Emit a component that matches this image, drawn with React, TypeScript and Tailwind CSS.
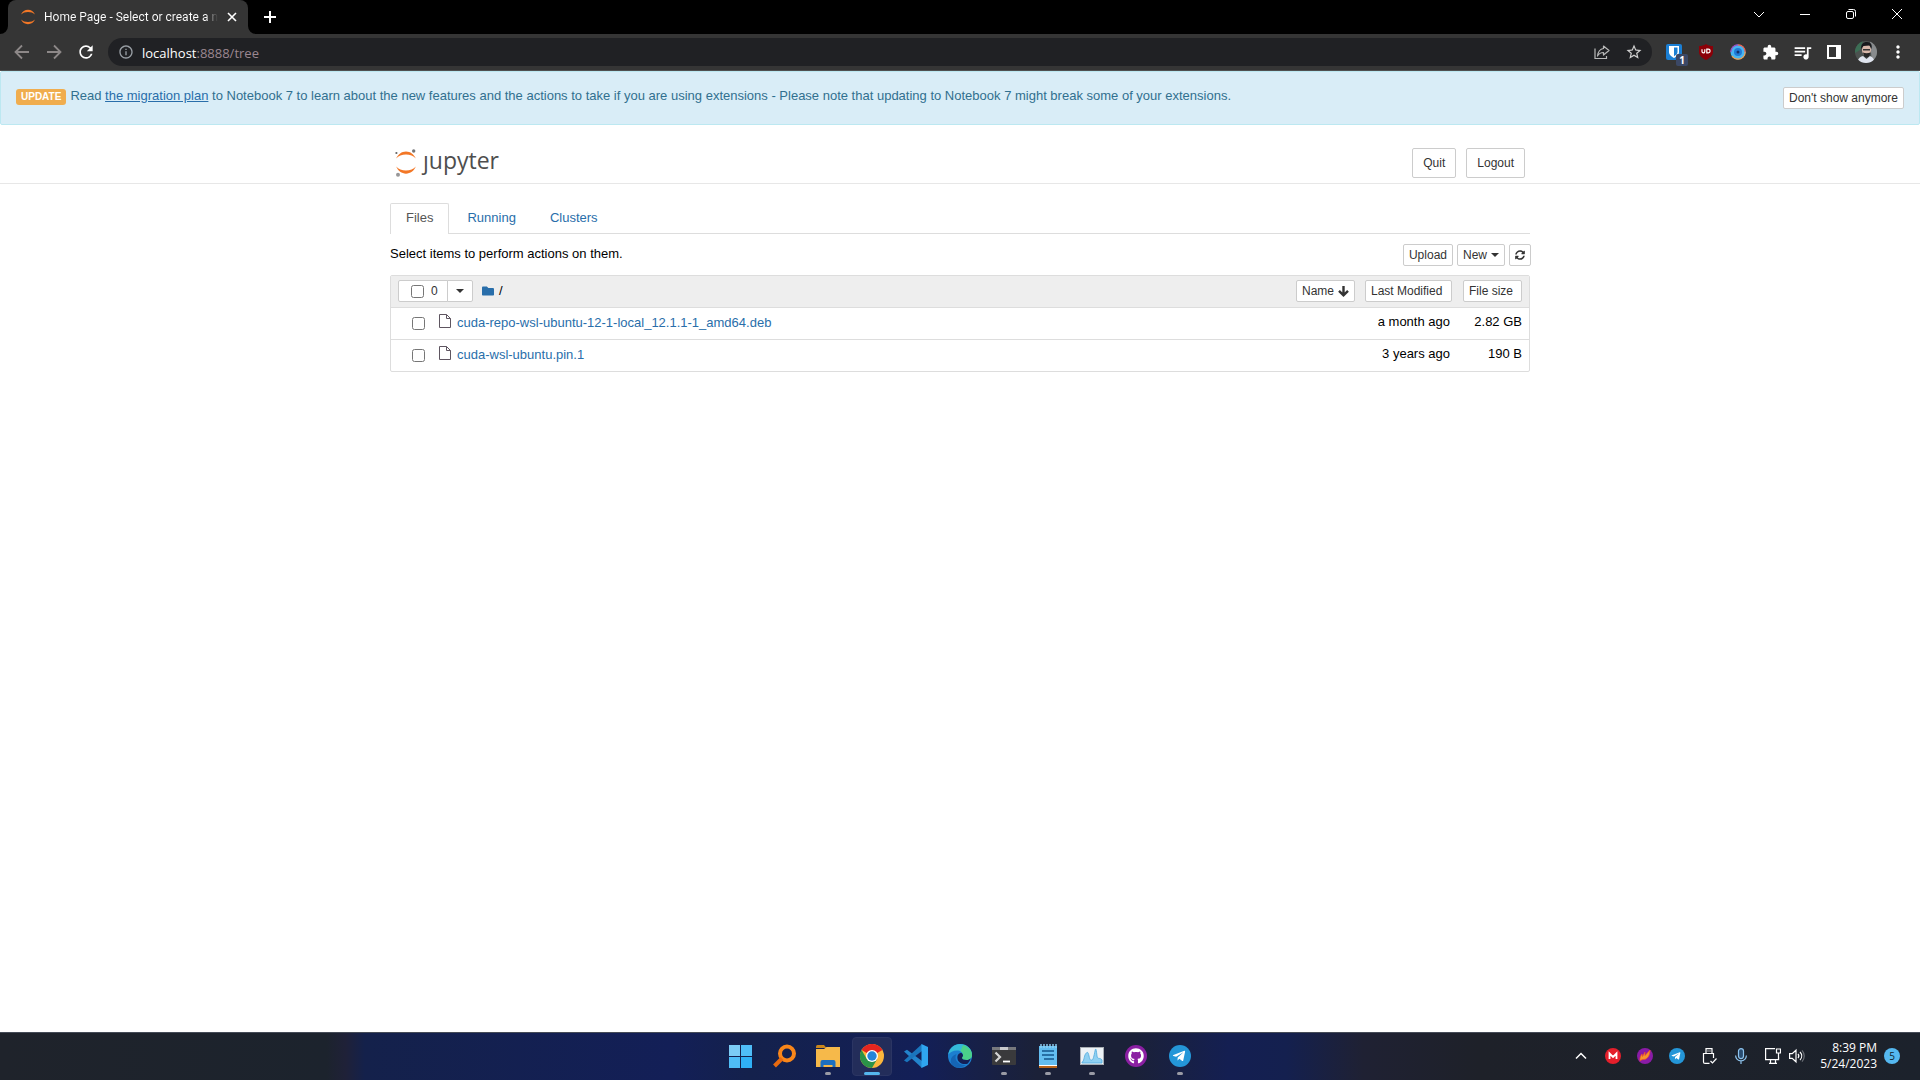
import React, { ReactNode } from "react";
import classNames from "clsx";
import { FaFolder, FaGithub, FaSyncAlt, FaTelegramPlane } from "react-icons/fa";
import { MdExtension, MdMoreVert, MdOutlineInfo, MdQueueMusic, MdRefresh, MdStarBorder } from "react-icons/md";

const files = [
  {
    name: "cuda-repo-wsl-ubuntu-12-1-local_12.1.1-1_amd64.deb",
    modified: "a month ago",
    size: "2.82 GB",
  },
  { name: "cuda-wsl-ubuntu.pin.1", modified: "3 years ago", size: "190 B" },
];

const uiFont = "font-['Segoe_UI','Open_Sans','Noto_Sans',sans-serif]";

/* ---------- browser ---------- */

function Favicon() {
  return (
    <svg viewBox="0 0 16 16" className="h-4 w-4 shrink-0" fill="#f37726">
      <path d="M1 5.4C2.3 2.5 4.9.8 8 .8s5.7 1.7 7 4.6C13.3 3.7 10.8 2.9 8 2.9S2.7 3.7 1 5.4z" />
      <path d="M1 10.6c1.3 2.9 3.9 4.6 7 4.6s5.700-1.7 7-4.6c-1.7 1.7-4.2 2.5-7 2.5s-5.3-.8-7-2.5z" />
    </svg>
  );
}

function WindowButton({ label, children }: { label: string; children: ReactNode }) {
  return (
    <button aria-label={label} className="flex h-7 w-[46px] items-center justify-center">
      <svg viewBox="0 0 12 12" className="h-3 w-3" fill="none" stroke="#fff" strokeWidth="1">
        {children}
      </svg>
    </button>
  );
}

function TabStrip() {
  return (
    <div className="flex h-[34px] items-stretch bg-black pl-2">
      <div className="relative flex w-60 items-center rounded-t-lg bg-[#353535] pl-3 pr-2 text-white">
        <svg viewBox="0 0 8 8" className="absolute -left-2 bottom-0 h-2 w-2" fill="#353535">
          <path d="M8 0v8H0a8 8 0 0 0 8-8z" />
        </svg>
        <svg viewBox="0 0 8 8" className="absolute -right-2 bottom-0 h-2 w-2" fill="#353535">
          <path d="M0 0v8h8a8 8 0 0 1-8-8z" />
        </svg>
        <Favicon />
        <span className="ml-2 whitespace-nowrap bg-linear-to-r from-white from-93% to-[#353535] bg-clip-text font-['Segoe_UI',Roboto,sans-serif] text-[12px] text-transparent">
          Home Page - Select or create a n
        </span>
        <button aria-label="Close tab" className="ml-auto flex h-4 w-4 items-center justify-center">
          <svg viewBox="0 0 10 10" className="h-[10px] w-[10px]" stroke="#fff" strokeWidth="1.6">
            <path d="M1 1l8 8M9 1l-8 8" />
          </svg>
        </button>
      </div>
      <button aria-label="New tab" className="ml-2 flex w-7 items-center justify-center">
        <svg viewBox="0 0 12 12" className="h-3 w-3" stroke="#fff" strokeWidth="2">
          <path d="M6 0v12M0 6h12" />
        </svg>
      </button>
      <div className="ml-auto flex">
        <WindowButton label="Search tabs">
          <path d="M1 4l5 5 5-5" />
        </WindowButton>
        <WindowButton label="Minimize">
          <path d="M1 6.5h10" />
        </WindowButton>
        <WindowButton label="Restore">
          <rect x="1.5" y="3.5" width="7" height="7" rx="1.5" />
          <path d="M3.5 1.5h5a2 2 0 0 1 2 2v5" />
        </WindowButton>
        <WindowButton label="Close">
          <path d="M1 1l10 10M11 1L1 11" />
        </WindowButton>
      </div>
    </div>
  );
}

function ToolButton({ label, children }: { label: string; children: ReactNode }) {
  return (
    <button aria-label={label} className="flex h-7 w-8 shrink-0 items-center justify-center">
      {children}
    </button>
  );
}

function Toolbar() {
  return (
    <div className="flex h-[37px] items-center border-b border-[#505050] bg-[#353535] px-[6px] text-white">
      <ToolButton label="Back">
        <svg viewBox="0 0 16 16" className="h-4 w-4" fill="none" stroke="#8d8888" strokeWidth="1.8">
          <path d="M15 8H2M8 1.5L1.5 8 8 14.5" />
        </svg>
      </ToolButton>
      <ToolButton label="Forward">
        <svg viewBox="0 0 16 16" className="h-4 w-4" fill="none" stroke="#8d8888" strokeWidth="1.8">
          <path d="M1 8h13M8 1.5L14.5 8 8 14.5" />
        </svg>
      </ToolButton>
      <ToolButton label="Reload">
        <MdRefresh size={20} />
      </ToolButton>
      <div className="ml-[6px] flex h-7 flex-1 items-center rounded-full bg-[#202124] pl-[10px] pr-[2px]">
        <MdOutlineInfo size={16} color="#9aa0a6" className="shrink-0" />
        <div className="ml-2 flex-1 pt-[2px] text-[13px] leading-5 text-[#9b8790]">
          <span className="text-white">localhost</span>:8888/tree
        </div>
        <ToolButton label="Share">
          <svg viewBox="0 0 16 16" className="h-4 w-4" fill="none" stroke="#b9b9b9" strokeWidth="1.2">
            <path d="M1 4.5v10h11.5V12" />
            <path d="M9.5 2l5.5 4.5-5.5 4.5V8.5C7 8.5 5 9.5 3.5 12 4 8 6 5 9.5 4.5z" strokeLinejoin="round" />
          </svg>
        </ToolButton>
        <ToolButton label="Bookmark this tab">
          <MdStarBorder size={18} color="#d0d0d0" />
        </ToolButton>
      </div>
      <div className="ml-[6px] flex">
        <ToolButton label="Bitwarden">
          <svg viewBox="0 0 28 28" className="h-7 w-7">
            <rect x="6" y="6" width="16" height="16" rx="2" fill="#1b7fd4" />
            <path d="M9 8h10v6c0 3-2.500 4.500-5 6-2.500-1.500-5-3-5-6z" fill="#fff" />
            <path d="M14 9.500h3.500V14c0 2-1.500 3-3.500 4.200z" fill="#1b7fd4" />
            <rect x="16" y="16" width="12" height="12" rx="2" fill="#3b4866" />
            <text x="22" y="26" textAnchor="middle" fill="#fff" fontSize="10" fontWeight="700" fontFamily="Open Sans">
              1
            </text>
          </svg>
        </ToolButton>
        <ToolButton label="uBlock Origin">
          <svg viewBox="0 0 16 16" className="h-4 w-4">
            <path d="M8 0c2 1.5 4.5 2 7 2v6c0 4-4 6.5-7 8-3-1.5-7-4-7-8V2c2.500 0 5-.5 7-2z" fill="#8b0008" />
            <path
              d="M4 5.200v2.300a1.400 1.400 0 0 0 2.800 0V5.200M8.800 5.200h1.500a1.800 1.800 0 0 1 0 3.600H8.800z"
              fill="none"
              stroke="#fff"
              strokeWidth="1.2"
            />
          </svg>
        </ToolButton>
        <ToolButton label="Eye extension">
          <svg viewBox="0 0 16 16" className="h-4 w-4" fill="none">
            <circle cx="8" cy="8" r="7.5" fill="#48b4f0" />
            <path d="M8 .8A7.200 7.200 0 0 0 .8 8" stroke="#a04cc0" strokeWidth="1.2" />
            <path d="M8 .8A7.200 7.200 0 0 1 15.200 8" stroke="#f0604a" strokeWidth="1.2" />
            <path d="M15.200 8A7.200 7.200 0 0 1 8 15.200 7.200 7.200 0 0 1 2 12" stroke="#f5a04c" strokeWidth="1.2" />
            <circle cx="8" cy="8" r="4" fill="#1f7ad6" />
            <circle cx="8" cy="8" r="1.5" fill="#12306c" />
          </svg>
        </ToolButton>
        <ToolButton label="Extensions">
          <MdExtension size={17} />
        </ToolButton>
        <ToolButton label="Media control">
          <MdQueueMusic size={21} />
        </ToolButton>
        <ToolButton label="Side panel">
          <svg viewBox="0 0 14 14" className="h-[14px] w-[14px]">
            <path fillRule="evenodd" d="M0 0h14v14H0zM2 2v10h7V2z" fill="#fff" />
          </svg>
        </ToolButton>
        <ToolButton label="Profile">
          <svg viewBox="0 0 22 22" className="h-[22px] w-[22px] rounded-full">
            <rect width="22" height="22" fill="#4c5250" />
            <path d="M0 0h8l-3 9-5 3z" fill="#3c6e55" />
            <path d="M15 0h7v22h-5z" fill="#888b8d" />
            <ellipse cx="11.5" cy="9" rx="4.5" ry="6" fill="#d8b8aa" />
            <path d="M6 8c0-5 2-7 6-7s5.500 3 4.500 7l-2-3.500-6 .5z" fill="#17191c" />
            <path d="M8 8h7v1.500H8z" fill="#333" />
            <path d="M2 22c1-5 4-6.500 6-7l3.500 3 3.500-3c3 1 4 3 5 7z" fill="#dfe4ee" />
            <path d="M8 11.500c2 1 5 1 7.500 0-.5 3-2 5-4 5s-3-2-3.500-5z" fill="#262626" />
          </svg>
        </ToolButton>
        <ToolButton label="Menu">
          <MdMoreVert size={20} />
        </ToolButton>
      </div>
    </div>
  );
}

/* ---------- notebook page ---------- */

type ButtonProps = { children: ReactNode; large?: boolean; className?: string; label?: string };

function Button({ children, large, className, label }: ButtonProps) {
  return (
    <button
      aria-label={label}
      className={classNames(
        "inline-flex items-center justify-center whitespace-nowrap rounded-[2px] border border-[#ccc] bg-white text-[12px] leading-[18px] text-[#333]",
        large ? "h-[30px] px-[10px]" : "h-[22px] px-[5px]",
        className
      )}
    >
      {children}
    </button>
  );
}

function Caret() {
  return (
    <svg viewBox="0 0 8 4" className="h-1 w-2" fill="#333">
      <path d="M0 0h8L4 4z" />
    </svg>
  );
}

function Logo() {
  return (
    <a href="#" aria-label="jupyter" className="flex items-start gap-[6px] pl-[5px] pt-6">
      <svg viewBox="0 0 22 28" className="h-7 w-[22px]">
        <g fill="#f37726">
          <path d="M1.200 9.500C3 5.200 6.700 2.400 11 2.400s8 2.800 9.800 7.100C18.600 7 15 5.600 11 5.600S3.400 7 1.200 9.500z" />
          <path d="M1.200 17.600c1.800 4.300 5.500 7.100 9.800 7.100s8-2.800 9.800-7.100c-2.200 2.500-5.800 3.900-9.800 3.900s-7.600-1.400-9.800-3.900z" />
        </g>
        <circle cx="18.700" cy="2" r="1.700" fill="#767677" />
        <circle cx="1.400" cy="4" r="1.100" fill="#616262" />
        <circle cx="3" cy="25.700" r="2" fill="#989798" />
      </svg>
      <span className="font-['Open_Sans','Noto_Sans',sans-serif] text-[23px] leading-[22px] text-[#4e4e4e]">ȷupyter</span>
    </a>
  );
}

function UpdateBanner() {
  return (
    <div className="flex items-start justify-between rounded-[2px] border border-[#bce8f1] bg-[#d9edf7] p-[15px] text-[13px] leading-[18px] text-[#31708f]">
      <p>
        <span className="mr-1 inline-block rounded-[3px] bg-[#f0ad4e] px-[5px] text-[10px] font-bold leading-4 text-white">
          UPDATE
        </span>
        Read{" "}
        <a href="#" className="text-[#296eaa] underline">
          the migration plan
        </a>{" "}
        to Notebook 7 to learn about the new features and the actions to take if you are using extensions - Please note
        that updating to Notebook 7 might break some of your extensions.
      </p>
      <Button>Don't show anymore</Button>
    </div>
  );
}

function FileList() {
  return (
    <div className="mt-[9px] overflow-hidden rounded-[2px] border border-[#ddd]">
      <table className="w-full border-collapse">
        <thead>
          <tr className="h-[31px] border-b border-[#ddd] bg-[#eee]">
            <th className="p-0 pl-[7px] font-normal">
              <div className="flex items-center">
                <div className="flex">
                  <label className="flex h-[22px] w-[50px] items-center gap-[7px] rounded-l-[2px] border border-[#ccc] bg-white pl-3 text-[12px] text-[#333]">
                    <input type="checkbox" aria-label="Select all" className="h-[13px] w-[13px]" />0
                  </label>
                  <Button label="Select by type" className="-ml-px w-[26px] rounded-l-none">
                    <Caret />
                  </Button>
                </div>
                <a href="#" aria-label="Root folder" className="ml-[9px]">
                  <FaFolder size={12} color="#296eaa" />
                </a>
                <span className="ml-[5px]">/</span>
                <Button className="ml-auto gap-1">
                  Name
                  <svg viewBox="0 0 11 11" className="h-[11px] w-[11px]" fill="none" stroke="#333" strokeWidth="2.4">
                    <path d="M5.500 0v9.500M1 4.800l4.500 4.500L10 4.800" />
                  </svg>
                </Button>
              </div>
            </th>
            <th className="w-[97px] p-0 pl-[10px] font-normal">
              <Button className="w-full justify-start">Last Modified</Button>
            </th>
            <th className="w-[77px] p-0 pl-[11px] pr-[7px] font-normal">
              <Button className="w-full justify-start">File size</Button>
            </th>
          </tr>
        </thead>
        <tbody>
          {files.map((file, index) => (
            <tr key={file.name} className={classNames("h-8", { "border-t border-[#ddd]": index > 0 })}>
              <td className="p-0 pl-[21px]">
                <div className="flex items-center">
                  <input type="checkbox" aria-label={file.name} className="h-[13px] w-[13px]" />
                  <svg viewBox="0 0 12 14" className="mb-1 ml-[14px] h-[14px] w-3" fill="none" stroke="#5e5560">
                    <path d="M.5.5h7l4 4v9H.5zM7.5.5v4h4" />
                  </svg>
                  <a href="#" className="ml-[6px] text-[#296eaa]">
                    {file.name}
                  </a>
                </div>
              </td>
              <td className="whitespace-nowrap p-0 pb-[2px] pr-[2px] text-right">{file.modified}</td>
              <td className="whitespace-nowrap p-0 pb-[2px] pr-[7px] text-right">{file.size}</td>
            </tr>
          ))}
        </tbody>
      </table>
    </div>
  );
}

function NotebookPage() {
  return (
    <main className="flex-1 bg-white font-['Liberation_Sans',Arial,sans-serif] text-[13px] leading-[18px] text-black">
      <UpdateBanner />
      <header className="border-b border-[#e7e7e7]">
        <div className="mx-auto flex h-[58px] max-w-[1140px] items-start justify-between">
          <Logo />
          <div className="flex gap-[10px] pr-[5px] pt-[23px]">
            <Button large>Quit</Button>
            <Button large>Logout</Button>
          </div>
        </div>
      </header>
      <div className="mx-auto mt-[19px] max-w-[1140px]">
        <nav className="flex h-[31px] gap-[2px] border-b border-[#ddd] text-[#296eaa]">
          <a href="#" className="h-[31px] rounded-t-[2px] border border-b-0 border-[#ddd] bg-white px-[15px] py-[5px] text-[#555]">
            Files
          </a>
          <a href="#" className="px-4 py-[6px]">
            Running
          </a>
          <a href="#" className="px-4 py-[6px]">
            Clusters
          </a>
        </nav>
        <div className="-mr-px mt-[10px] flex items-center">
          <p className="flex-1 pb-[2px]">Select items to perform actions on them.</p>
          <div className="flex gap-1">
            <Button>Upload</Button>
            <Button className="gap-1">
              New <Caret />
            </Button>
            <Button label="Refresh" className="w-[22px]">
              <FaSyncAlt size={10} className="shrink-0" />
            </Button>
          </div>
        </div>
        <FileList />
      </div>
    </main>
  );
}

/* ---------- taskbar ---------- */

type TaskbarAppProps = { label: string; running?: boolean; active?: boolean; children: ReactNode };

function TaskbarApp({ label, running, active, children }: TaskbarAppProps) {
  return (
    <button aria-label={label} className="relative flex w-11 items-center justify-center pb-px">
      {active && <span className="absolute inset-x-[2px] inset-y-1 rounded-[4px] border border-[#2b3563] bg-[#232d5a]" />}
      <svg viewBox="0 0 24 24" className="relative h-6 w-6">
        {children}
      </svg>
      {running && (
        <span
          className={classNames(
            "absolute bottom-[5px] h-[3px] rounded-full",
            active ? "w-4 bg-[#55b6ee]" : "w-[6px] bg-[#9a9ba5]"
          )}
        />
      )}
    </button>
  );
}

function TaskbarApps() {
  return (
    <div className="flex">
      <TaskbarApp label="Start">
        <path d="M1 1h11v11H1z" fill="#7cccf5" />
        <path d="M13 1h11v11H13zM1 13h11v11H1z" fill="#4fbdf7" />
        <path d="M13 13h11v11H13z" fill="#2fb0f6" />
      </TaskbarApp>
      <TaskbarApp label="Search">
        <circle cx="15" cy="9.5" r="7" fill="none" stroke="#f9861a" strokeWidth="4" />
        <path d="M10 14.500L2.500 22" stroke="#e86a10" strokeWidth="4" />
      </TaskbarApp>
      <TaskbarApp label="File Explorer" running>
        <path d="M0 2.500Q0 1 1.500 1H8l2.500 3H0z" fill="#c8851c" />
        <path d="M0 5h8l2.500-2H24v20H0z" fill="#f6b94a" />
        <path d="M4.500 23v-5q0-2 2-2h11q2 0 2 2v5h-3v-2h-9v2z" fill="#1c6fc0" />
      </TaskbarApp>
      <TaskbarApp label="Google Chrome" running active>
        <circle cx="12" cy="12" r="12" fill="#fbb73c" />
        <path d="M12 12L1.600 6A12 12 0 0 1 22.400 6z" fill="#e5251f" />
        <path d="M1.600 6a12 12 0 0 0 10.400 18l5.200-9L12 12l-5.200 3z" fill="#2b9348" />
        <circle cx="12" cy="12" r="6" fill="#fff" />
        <circle cx="12" cy="12" r="4.700" fill="#2484d8" />
      </TaskbarApp>
      <TaskbarApp label="Visual Studio Code">
        <path d="M0 7.500L3 5.800 18 17v7z" fill="#2384cc" />
        <path d="M0 16.500L3 18.200 18 7V0z" fill="#1a75bd" />
        <path d="M17.500 0L24 3v18l-6.500 3z" fill="#2fa5f0" />
      </TaskbarApp>
      <TaskbarApp label="Microsoft Edge">
        <circle cx="12" cy="12" r="12" fill="#1c7fd0" />
        <path
          d="M.2 10.500C1.500 4 6.500 0 12 0c7 0 12 5 12 10.500 0 3.500-2.500 5.500-5.500 5.500-3 0-4.500-1-4.500-2s1-1.200 1-3c0-2.500-2.500-4.500-6-4.500-4 0-7 2-8.800 4z"
          fill="#35b9d8"
        />
        <path
          d="M15 1c5.500 1.500 9 5.500 9 10 0 3-2.500 5-5.500 5-3 0-4.500-1-4.500-2s1-1.200 1-3c0-1.700-1-3-2.500-3.800z"
          fill="#4bd18a"
        />
        <path
          d="M14 14c0 1 1.500 2 4.500 2 1.800 0 3.200-.7 4.200-1.800-.6 2-1.700 4-3.200 5.500-6 1.500-11-2-10-7.700.5-1.800 2-3 3.500-3.300 1.300.8 2 1.500 2 2.800 0 1.300-1 1.500-1 2.500z"
          fill="#152055"
        />
        <path d="M8.500 10c-3 5 1 11 9 11-4 3.500-9 3.500-12 1C1 19 2 12 8.500 10z" fill="#1565b5" />
      </TaskbarApp>
      <TaskbarApp label="Terminal" running>
        <rect y="3" width="24" height="18" rx="1" fill="#3a3a3c" />
        <path d="M0 3h8v3H0zM16 3h8v3h-8z" fill="#78797d" />
        <path d="M8 3h8v3H8z" fill="#c8c9cc" />
        <path d="M3.500 8.500L8 13l-4.500 4.500" fill="none" stroke="#d4d4d4" strokeWidth="2.2" />
        <path d="M11 17.500h7" stroke="#fff" strokeWidth="1.8" />
      </TaskbarApp>
      <TaskbarApp label="Notepad" running>
        <path d="M3 2h18v20H3z" fill="#63bdf0" />
        <path d="M3 21h18v1H3z" fill="#fff" />
        <path d="M3 22h18v2H3z" fill="#b8651b" />
        <path d="M5 0v4M8 0v4M11 0v4M14 0v4M17 0v4M20 0v4" stroke="#8fd2f6" strokeWidth="1.4" />
        <path d="M6 7h12M6 11h12M8 15h10" stroke="#14568c" strokeWidth="1.7" />
      </TaskbarApp>
      <TaskbarApp label="Resource Monitor" running>
        <rect x=".5" y="3.5" width="23" height="17" fill="#edf2f6" stroke="#a8adb3" />
        <path
          d="M2 18c2 0 2-6 3.500-8S8 7 9 12s2 4 3 4 2-4 3-9 1.500 1 2 5 3 1 5 4v3H2z"
          fill="#8fd0f2"
          stroke="#4fa9dd"
          strokeWidth=".8"
        />
      </TaskbarApp>
      <TaskbarApp label="GitHub Desktop">
        <circle cx="12" cy="12" r="11" fill="#8b1fa2" />
        <FaGithub x={4} y={4} size={16} color="#fff" />
      </TaskbarApp>
      <TaskbarApp label="Telegram" running>
        <circle cx="12" cy="12" r="11" fill="#2496d8" />
        <FaTelegramPlane x={4} y={5} size={14} color="#fff" />
      </TaskbarApp>
    </div>
  );
}

function TrayIcon({ label, children }: { label: string; children: ReactNode }) {
  return (
    <button aria-label={label} className="flex w-8 items-center justify-center">
      <svg viewBox="0 0 16 16" className="h-4 w-4" fill="none" stroke="#fff" strokeWidth="1.2">
        {children}
      </svg>
    </button>
  );
}

function Tray() {
  return (
    <div className="flex items-stretch justify-end pb-px pr-5">
      <TrayIcon label="Show hidden icons">
        <path d="M3 10.500L8 5.500l5 5" strokeWidth="1.5" />
      </TrayIcon>
      <TrayIcon label="MEGA">
        <circle cx="8" cy="8" r="8" fill="#e51f2b" stroke="none" />
        <path d="M4.500 11V5.500L8 9l3.500-3.500V11" strokeWidth="1.8" />
      </TrayIcon>
      <TrayIcon label="Flameshot">
        <circle cx="8" cy="8" r="8" fill="#8a1ba6" stroke="none" />
        <path
          d="M3 13c-.5-3 .5-5 2-7l.5 2.500L8 4v3.500L13 2c0 5-2 9-6 9.500-2 0-3 .5-4 1.500z"
          fill="#f6962a"
          stroke="#ee4c2c"
          strokeWidth=".7"
        />
      </TrayIcon>
      <TrayIcon label="Telegram">
        <circle cx="8" cy="8" r="8" fill="#2496d8" stroke="none" />
        <FaTelegramPlane x={2} y={3} size={10} color="#fff" stroke="none" />
      </TrayIcon>
      <TrayIcon label="Safely remove hardware">
        <path d="M5 5V.6h6V5M8.500 15.400H4a1.500 1.500 0 0 1-1.500-1.500V5.500h10V10M7 2.500v1M9 2.500v1M9.500 13l2 2 4-4.500" />
      </TrayIcon>
      <TrayIcon label="Microphone">
        <g stroke="#8ec4ee">
          <rect x="5.5" y=".6" width="5" height="10" rx="2.5" fill="#294c70" />
          <path d="M2.600 7.500a5.400 5.400 0 0 0 10.800 0M8 13v3" />
        </g>
      </TrayIcon>
      <button aria-label="Network and volume" className="flex w-12 items-center justify-between pl-2">
        <svg viewBox="0 0 16 16" className="h-4 w-4" fill="none" stroke="#fff" strokeWidth="1.2">
          <path d="M10 .6H.6v11h13V9M4 15.400h8M5.500 12v3M10.500 12v3M11.500 1h4v4h-4zM13.500 5v6" />
        </svg>
        <svg viewBox="0 0 16 16" className="h-4 w-4" fill="none" stroke="#fff" strokeWidth="1.2">
          <path d="M.6 5.600h2.600L7 2.200v11.600L3.200 10.400H.6zM9 6c1 1.200 1 2.800 0 4M11 4c2.200 2.300 2.200 5.700 0 8" />
          <path d="M13 2.300c3 3.300 3 8.100 0 11.400" stroke="#6b6f76" />
        </svg>
      </button>
      <div className="flex w-[72px] flex-col justify-center pb-px text-right text-[12px] leading-4 text-white">
        <span>8:39 PM</span>
        <span>5/24/2023</span>
      </div>
      <span className="ml-[7px] flex h-4 w-4 items-center justify-center self-center rounded-full bg-[#55b8f0] text-[10px] leading-4 text-[#10222e]">
        5
      </span>
    </div>
  );
}

function Taskbar() {
  return (
    <footer
      className={classNames(
        "grid h-12 grid-cols-[1fr_auto_1fr] border-t border-[#454b57] bg-[linear-gradient(90deg,#1f232b_0%,#1c232d_17%,#1f2138_18%,#14214b_19%,#131f57_35%,#14214c_39%,#131f57_48%,#1b2138_54%,#1b2138_59%,#141f52_64%,#14204f_67%,#1f2133_71%,#1e2129_77%,#1c222c_100%)]",
        uiFont
      )}
    >
      <div />
      <TaskbarApps />
      <Tray />
    </footer>
  );
}

export default function App() {
  return (
    <div className="flex min-h-screen flex-col">
      <div className={uiFont}>
        <TabStrip />
        <Toolbar />
      </div>
      <NotebookPage />
      <Taskbar />
    </div>
  );
}
